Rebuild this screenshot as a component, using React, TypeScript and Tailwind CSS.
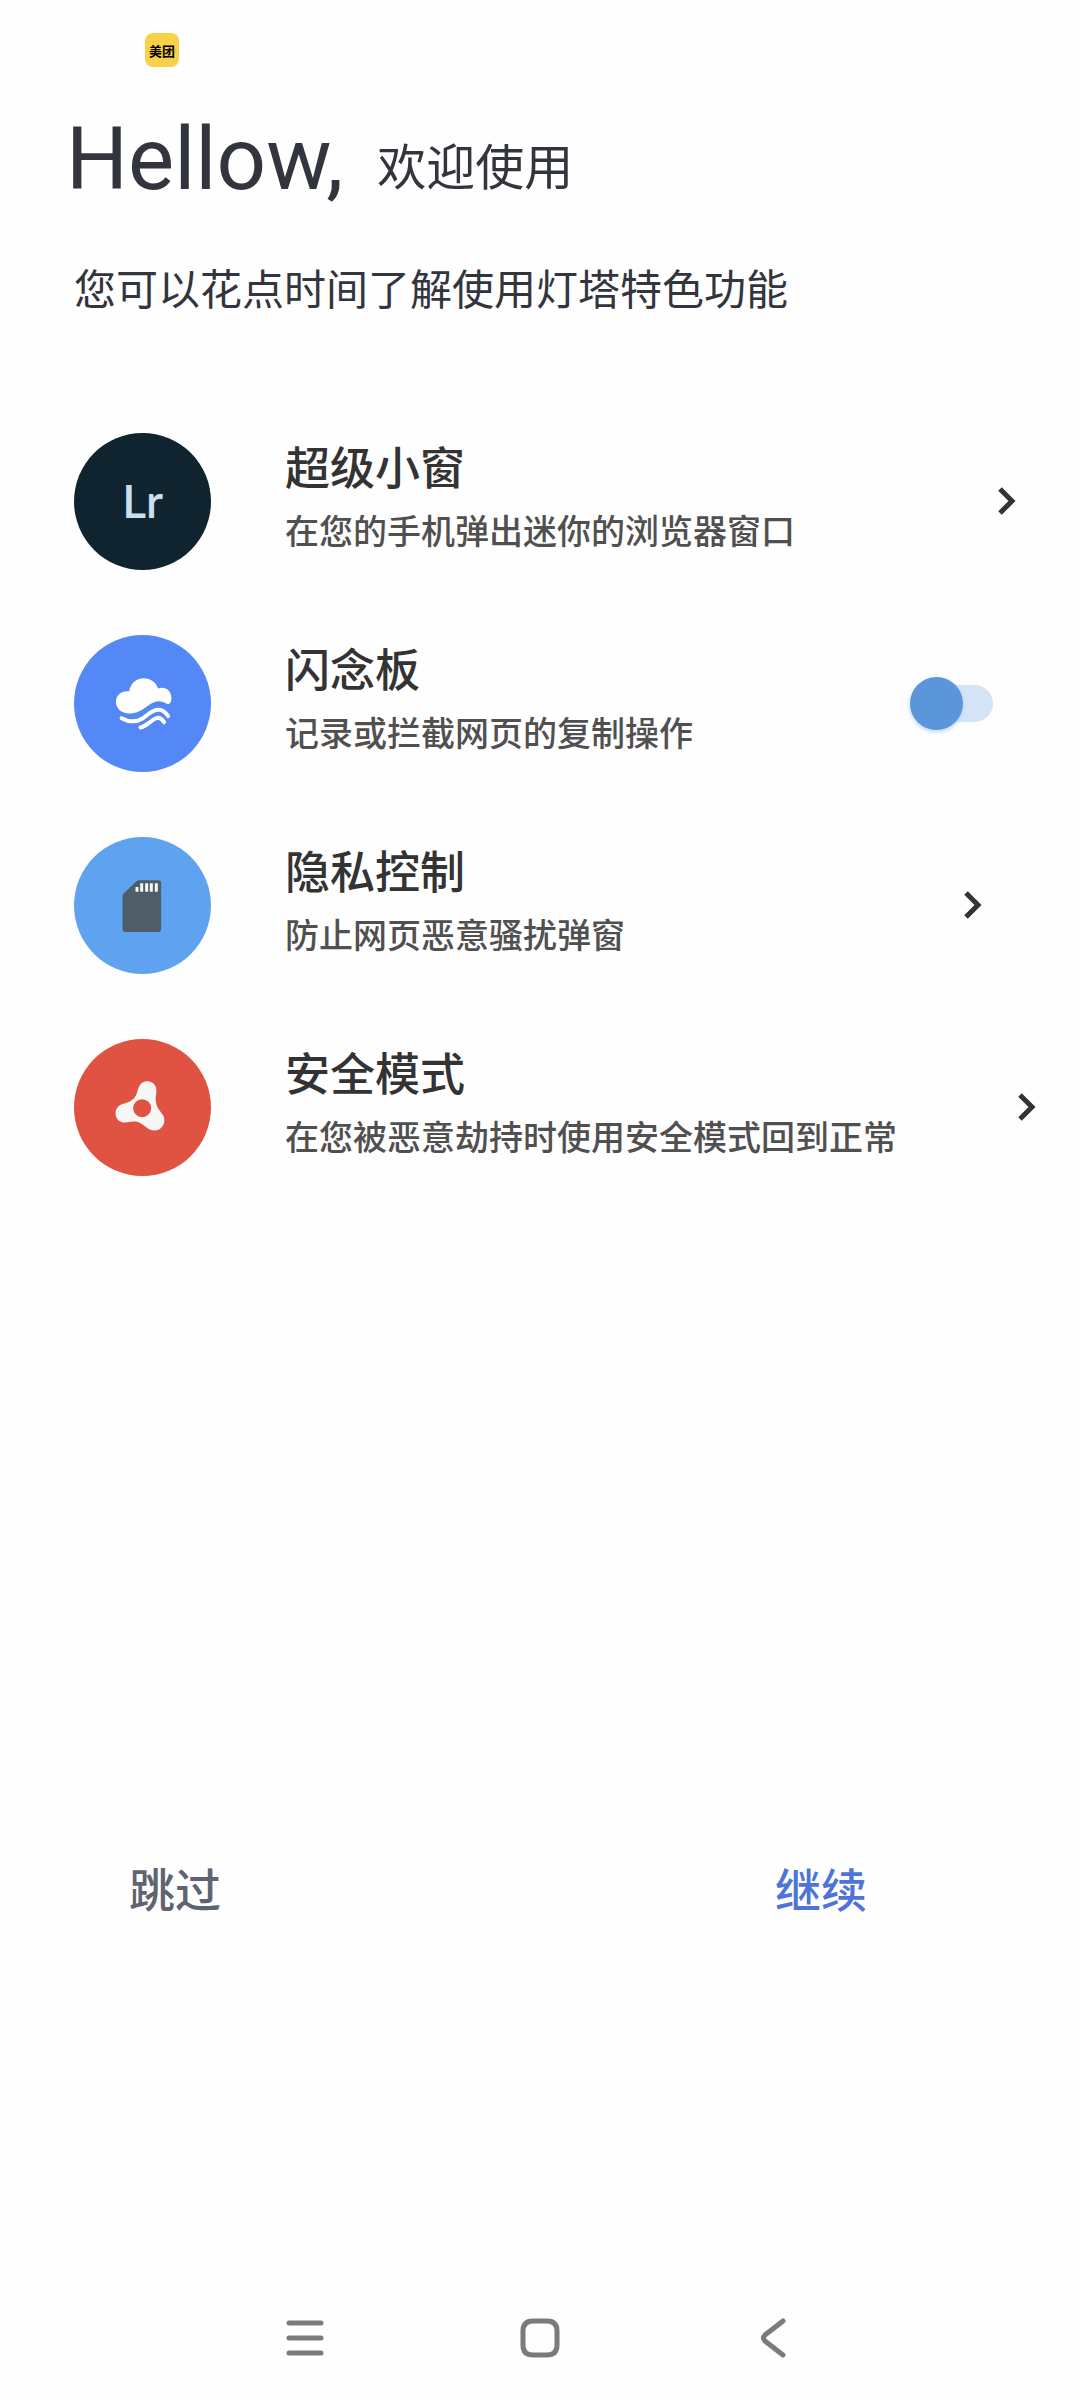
import { useState } from 'react';
import type { ReactNode } from 'react';

type Feature = {
  id: string;
  title: string;
  description: string;
  iconClass: string;
  icon: ReactNode;
  action: 'link' | 'switch';
  actionClass: string;
};

const CloudIcon = () => (
  <svg viewBox="42 43 412 412" className="w-full" aria-hidden="true">
    <path
      fill="#fff"
      d="M208 212C212 188 230 173 251 173C273 173 290 186 295 204C314 196 335 209 335 232C335 240 333 246 330 249C328 252 324 252 321 250C312 244 302 241 291 243C279 245 270 252 258 260C243 270 229 279 208 279C184 279 168 264 168 244C168 224 184 210 208 212Z"
    />
    <g fill="none" stroke="#fff" strokeWidth="12" strokeLinecap="round">
      <path d="M185 293C205 304 227 307 248 294C264 284 276 268 296 268C310 268 318 277 325 287" />
      <path d="M242 321C266 316 276 294 295 292C304 292 308 299 313 305" />
    </g>
  </svg>
);

const SdCardIcon = () => (
  <svg viewBox="42 35 412 412" className="w-full" aria-hidden="true">
    <path
      fill="#4f5e66"
      d="M238 165H295Q304 165 304 174V312Q304 321 295 321H197Q188 321 188 312V214Q188 208 192 204L229 169Q233 165 238 165Z"
    />
    <path
      fill="#f4f8fa"
      d="M227 185H236V200H227ZM241 174H250V200H241ZM256 174H265V200H256ZM270 174H279V200H270ZM285 174H294V200H285Z"
    />
  </svg>
);

const SpinnerIcon = () => (
  <svg viewBox="42 41 412 412" className="w-full" aria-hidden="true">
    <path
      fill="#f6f6f6"
      fillRule="evenodd"
      d="M263 168C278 168 290 180 290 196C290 207 286 217 288 228C290 248 302 258 310 270C321 291 307 316 284 316C264 316 257 301 242 294C223 285 209 292 194 292C178 292 167 280 167 264C167 249 178 238 193 235C208 231 220 226 228 211C236 198 234 168 263 168ZM247 222A27 27 0 1 0 247 276A27 27 0 1 0 247 222Z"
    />
  </svg>
);

const features: Feature[] = [
  {
    id: 'window',
    title: '超级小窗',
    description: '在您的手机弹出迷你的浏览器窗口',
    iconClass: 'bg-[#10242f]',
    icon: (
      <span className="font-['Lato',sans-serif] text-[46px] leading-none font-semibold text-[#c9dff0]">
        Lr
      </span>
    ),
    action: 'link',
    actionClass: 'mr-16',
  },
  {
    id: 'clipboard',
    title: '闪念板',
    description: '记录或拦截网页的复制操作',
    iconClass: 'bg-[#5488f7]',
    icon: <CloudIcon />,
    action: 'switch',
    actionClass: 'mr-[87px]',
  },
  {
    id: 'privacy',
    title: '隐私控制',
    description: '防止网页恶意骚扰弹窗',
    iconClass: 'bg-[#5ea2f0]',
    icon: <SdCardIcon />,
    action: 'link',
    actionClass: 'mr-[98px]',
  },
  {
    id: 'safe',
    title: '安全模式',
    description: '在您被恶意劫持时使用安全模式回到正常',
    iconClass: 'bg-[#e05242]',
    icon: <SpinnerIcon />,
    action: 'link',
    actionClass: 'mr-11',
  },
];

const Chevron = () => (
  <svg viewBox="0 0 18 30" className="h-[30px] w-[18px]" aria-hidden="true">
    <path d="M2 3L14 15L2 27" fill="none" stroke="#333" strokeWidth="5" />
  </svg>
);

const FeatureRow = ({ feature }: { feature: Feature }) => {
  const [enabled, setEnabled] = useState(false);

  return (
    <li className="flex h-[138px] items-center">
      <div
        className={`flex size-[137px] shrink-0 items-center justify-center rounded-full ${feature.iconClass}`}>
        {feature.icon}
      </div>
      <div className="ml-[74px] flex-1 pb-2 font-medium whitespace-nowrap">
        <h2
          id={`${feature.id}-title`}
          className="text-[45px] leading-[66px] text-[#333]">
          {feature.title}
        </h2>
        <p className="text-[34px] leading-[62px] text-[#505050]">
          {feature.description}
        </p>
      </div>
      {feature.action === 'switch' ? (
        <label
          className={`relative flex h-[53px] w-[83px] items-center ${feature.actionClass}`}>
          <input
            type="checkbox"
            role="switch"
            aria-labelledby={`${feature.id}-title`}
            checked={enabled}
            onChange={(e) => setEnabled(e.target.checked)}
            className="peer ml-1 h-[37px] w-full appearance-none rounded-full bg-[#d4e3f6]"
          />
          <span className="absolute left-0 size-[53px] rounded-full bg-[#5b95da] shadow-[0_2px_4px_#b9d8f8] transition-transform peer-checked:translate-x-[30px]" />
        </label>
      ) : (
        <button
          type="button"
          aria-labelledby={`${feature.id}-title`}
          className={feature.actionClass}>
          <Chevron />
        </button>
      )}
    </li>
  );
};

const App = () => {
  return (
    <div className="flex min-h-screen flex-col bg-[#fefefe] font-['Noto_Sans_CJK_SC',sans-serif] text-[#32353d]">
      <div className="px-[145px] pt-[33px]">
        <div className="flex size-[34px] items-center justify-center rounded-lg bg-[#f8d147] text-[13px] leading-none font-bold text-black">
          美团
        </div>
      </div>

      <header className="pt-10 pl-[66px]">
        <h1 className="flex items-end gap-[34px]">
          <span className="font-['Roboto',sans-serif] text-[87px] leading-[104px]">
            Hellow,
          </span>
          <span className="text-[49px] leading-[94px]">欢迎使用</span>
        </h1>
        <p className="mt-11 pl-2 text-[42px] leading-[64px]">
          您可以花点时间了解使用灯塔特色功能
        </p>
      </header>

      <main className="flex flex-1 flex-col pt-[113px]">
        <ul className="flex flex-col gap-16 pl-[74px]">
          {features.map((feature) => (
            <FeatureRow key={feature.id} feature={feature} />
          ))}
        </ul>
        <div className="mt-auto mb-[399px] flex justify-between pr-[213px] pl-[129px] text-[46px] leading-[64px] font-medium">
          <button type="button" className="text-[#5f6472]">
            跳过
          </button>
          <button type="button" className="text-[#4d74d6]">
            继续
          </button>
        </div>
      </main>

      <nav className="flex justify-between pr-[294px] pb-[42px] pl-[286px]">
        <button type="button" aria-label="最近任务">
          <svg viewBox="0 0 38 40" className="h-10 w-[38px]" aria-hidden="true">
            <path
              d="M3 5H35M3 20H35M3 35H35"
              stroke="#7b7b7b"
              strokeWidth="5"
              strokeLinecap="round"
            />
          </svg>
        </button>
        <button type="button" aria-label="主屏幕">
          <svg viewBox="0 0 40 40" className="size-10" aria-hidden="true">
            <path
              d="M13 3H27Q37 3 37 13V27Q37 37 27 37H13Q3 37 3 27V13Q3 3 13 3Z"
              fill="none"
              stroke="#7b7b7b"
              strokeWidth="5"
            />
          </svg>
        </button>
        <button type="button" aria-label="返回">
          <svg viewBox="-4 0 30 40" className="h-10 w-[30px]" aria-hidden="true">
            <path
              d="M23 3L5 17Q2 20 5 23L23 37"
              fill="none"
              stroke="#7b7b7b"
              strokeWidth="5"
              strokeLinecap="round"
            />
          </svg>
        </button>
      </nav>
    </div>
  );
};

export default App;
